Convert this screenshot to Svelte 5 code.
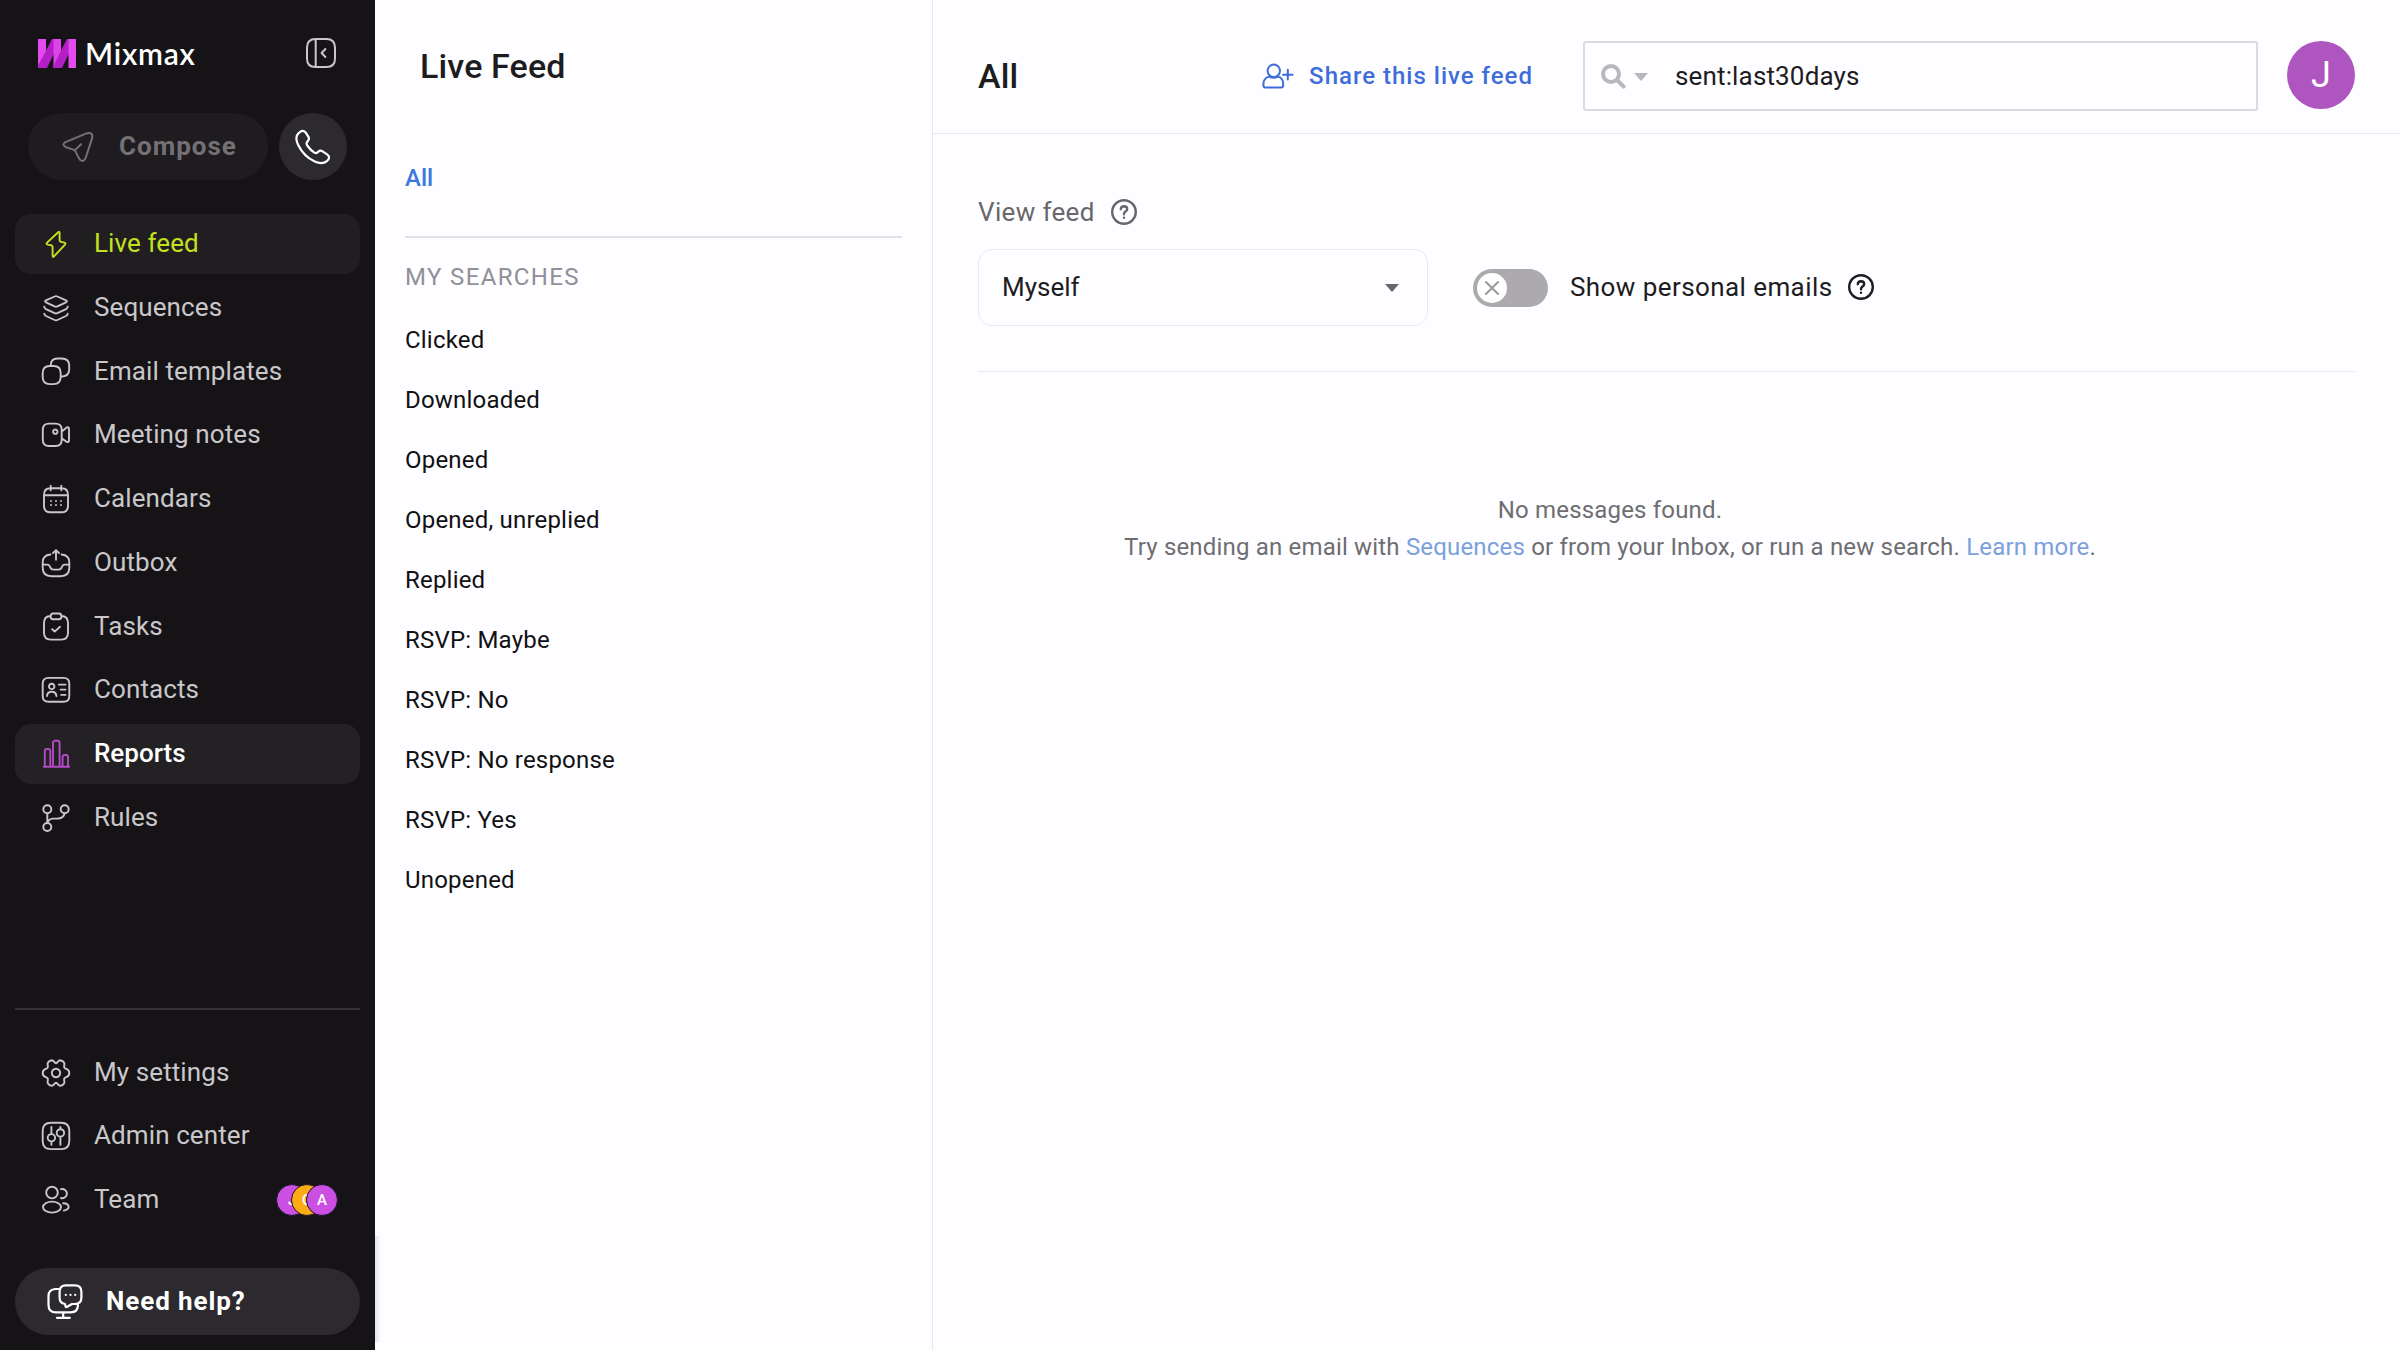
<script lang="ts">
	type NavItem = { label: string; icon: string };

	let active = $state('Live feed');
	let hovered = $state('Reports');
	let search = $state('sent:last30days');
	let showPersonal = $state(false);

	const mainNav: NavItem[] = [
		{ label: 'Live feed', icon: 'bolt' },
		{ label: 'Sequences', icon: 'layers' },
		{ label: 'Email templates', icon: 'copy' },
		{ label: 'Meeting notes', icon: 'video' },
		{ label: 'Calendars', icon: 'calendar' },
		{ label: 'Outbox', icon: 'outbox' },
		{ label: 'Tasks', icon: 'clipboard' },
		{ label: 'Contacts', icon: 'card' },
		{ label: 'Reports', icon: 'chart' },
		{ label: 'Rules', icon: 'branch' }
	];

	const footerNav: NavItem[] = [
		{ label: 'My settings', icon: 'gear' },
		{ label: 'Admin center', icon: 'sliders' },
		{ label: 'Team', icon: 'team' }
	];

	const team = [
		{ initial: 'J', color: '#cb50e2' },
		{ initial: 'C', color: '#fdab14' },
		{ initial: 'A', color: '#cb50e2' }
	];

	const searches = [
		'Clicked',
		'Downloaded',
		'Opened',
		'Opened, unreplied',
		'Replied',
		'RSVP: Maybe',
		'RSVP: No',
		'RSVP: No response',
		'RSVP: Yes',
		'Unopened'
	];

	// 30x30 stroke icons
	const icons: Record<string, string> = {
		bolt: 'M17.2 3.2L6.1 13.6Q4.8 15.1 6.8 15.6L10.2 16.2Q11.6 16.5 11.6 18V26.6Q11.7 28.6 13.2 27.2L24 15.6Q25.2 14.2 23.4 13.6L20 12.9Q18.6 12.6 18.6 11.2V3.8Q18.5 2 17.2 3.2Z',
		layers:
			'M13.6 3.5Q15 2.8 16.4 3.5L25 7.4Q26.8 8.3 25 9.3L16.4 13.4Q15 14 13.6 13.4L5 9.3Q3.2 8.3 5 7.4ZM3.3 13.8Q3.4 15.4 5 16.2L13.6 20.2Q15 20.9 16.4 20.2L25 16.2Q26.6 15.4 26.7 13.8M3.3 20.7Q3.4 22.2 5 23L13.6 27Q15 27.7 16.4 27L25 23Q26.6 22.2 26.7 20.7',
		copy: 'M8.7 9H12.7Q19.7 9 19.7 16V20.1Q19.7 27.1 12.7 27.1H8.7Q1.7 27.1 1.7 20.1V16Q1.7 9 8.7 9ZM9.7 8.8Q9.7 1.5 16.5 1.5H20.5Q28.2 1.5 28.2 8.5V12.5Q28.2 19.5 19.7 19.7',
		video: 'M8 3.6H14.5Q20.7 3.6 20.7 9.8V19.8Q20.7 26 14.5 26H8Q1.8 26 1.8 19.8V9.8Q1.8 3.6 8 3.6ZM20.8 11.5L25.4 7.7Q28 6.3 28 9V20.4Q28 23 25.4 21.7L20.8 18.2M16.5 11.7A2.2 2.2 0 1 1 12.1 11.7A2.2 2.2 0 1 1 16.5 11.7',
		calendar:
			'M9.5 4.3H20.5Q27 4.3 27 10.8V21.8Q27 28.3 20.5 28.3H9.5Q3 28.3 3 21.8V10.8Q3 4.3 9.5 4.3ZM3 11.3H27M9.7 1.7V6.2M20.3 1.7V6.2M10 17v.1M15 17v.1M20 17v.1M10 21v.1M15 21v.1M20 21v.1',
		outbox:
			'M9.4 6.5Q1.7 7.2 1.7 14.5V19.5Q1.7 28.2 10.5 28.2H19.5Q28.3 28.2 28.3 19.5V14.5Q28.3 7.2 20.6 6.5M15 11.8V2.4M12 5.2L15 2.2L18 5.2M1.7 16.6H6.2Q8 16.6 8.8 18.4L9.6 20Q10.4 21.6 12.2 21.6H17.8Q19.6 21.6 20.4 20L21.2 18.4Q22 16.6 23.8 16.6H28.3',
		clipboard:
			'M9.7 4Q3 4.3 3 10.8V20.8Q3 27.6 9.8 27.6H20.2Q27 27.6 27 20.8V10.8Q27 4.3 20.3 4M12 1.5H18Q20.3 1.5 20.3 4V5Q20.3 7.2 18 7.2H12Q9.7 7.2 9.7 5V4Q9.7 1.5 12 1.5ZM11.2 17.2L13.7 19.6L19 14.8',
		card: 'M7.5 2.9H22.5Q28.3 2.9 28.3 8.7V20.9Q28.3 26.7 22.5 26.7H7.5Q1.7 26.7 1.7 20.9V8.7Q1.7 2.9 7.5 2.9ZM13.4 11.4A2.7 2.7 0 1 1 8 11.4A2.7 2.7 0 1 1 13.4 11.4M6 21Q6.4 16.8 10.7 16.8Q15 16.8 15.4 21M17.8 9.6H24.5M19.6 14.6H24.5M20.2 19.9H24.5',
		chart: 'M2.8 27.7H28.2M3.8 27.5V12Q3.8 10 5.8 10H7.3Q9.3 10 9.3 12V27.5M12 27.5V4Q12 1.8 14 1.8H16.6Q18.6 1.8 18.6 4V27.5M21.6 27.5V18Q21.6 16 23.6 16H25Q27 16 27 18V27.5',
		branch: 'M10.3 6.2A4 4 0 1 1 2.3 6.2A4 4 0 1 1 10.3 6.2M27.7 6.2A4 4 0 1 1 19.7 6.2A4 4 0 1 1 27.7 6.2M10.3 24A4 4 0 1 1 2.3 24A4 4 0 1 1 10.3 24M6.3 10.2V20M23.7 10.2Q22.6 15.6 16 15.6H12Q7.4 15.8 6.3 20',
		gear: 'M15 5.2C16.6 5.2 17 2.2 19.2 2.2Q22 2.6 23.2 4.8C24 7 22.4 8.2 23.4 9.8C24.6 11.4 28.3 10.4 28.3 15C28.3 19.6 24.6 18.6 23.4 20.2C22.4 21.8 24 23 23.2 25.2Q22 27.4 19.2 27.8C17 27.8 16.6 24.8 15 24.8C13.4 24.8 13 27.8 10.8 27.8Q8 27.4 6.8 25.2C6 23 7.6 21.8 6.6 20.2C5.4 18.6 1.7 19.6 1.7 15C1.7 10.4 5.4 11.4 6.6 9.8C7.6 8.2 6 7 6.8 4.8Q8 2.6 10.8 2.2C13 2.2 13.4 5.2 15 5.2ZM19.2 15A4.2 4.2 0 1 1 10.8 15A4.2 4.2 0 1 1 19.2 15',
		sliders:
			'M10 1.7H20Q28.3 1.7 28.3 10V20Q28.3 28.1 20 28.1H10Q1.7 28.1 1.7 20V10Q1.7 1.7 10 1.7ZM10.4 6V13M10.4 20.6V23.7M14.1 16.8A3.7 3.7 0 1 1 6.7 16.8A3.7 3.7 0 1 1 14.1 16.8M19.4 6V8.1M19.4 15.6V23.7M23.1 11.9A3.7 3.7 0 1 1 15.7 11.9A3.7 3.7 0 1 1 23.1 11.9',
		team: 'M16.8 7.6A5.8 5.8 0 1 1 5.2 7.6A5.8 5.8 0 1 1 16.8 7.6M20 22.1A9 5.5 0 1 1 2 22.1A9 5.5 0 1 1 20 22.1M20 4.2A4.6 4.6 0 1 1 20 13M22.2 18.2Q27.6 18.4 27.6 21.8Q27.6 24.6 22.8 25.6'
	};
</script>

{#snippet icon(name: string)}
	<svg class="icon" viewBox="0 0 30 30" aria-hidden="true"><path d={icons[name]} /></svg>
{/snippet}

{#snippet navRow(item: NavItem)}
	<button
		class="nav-item"
		class:active={active === item.label}
		class:hovered={hovered === item.label}
		onclick={() => (active = item.label)}
		onmouseenter={() => (hovered = item.label)}
	>
		{@render icon(item.icon)}
		<span>{item.label}</span>
		{#if item.label === 'Team'}
			<div class="avatars">
				{#each team as member}
					<i style="background: {member.color}">{member.initial}</i>
				{/each}
			</div>
		{/if}
	</button>
{/snippet}

{#snippet help()}
	<svg class="help-icon" viewBox="0 0 28 28" aria-hidden="true">
		<circle cx="14" cy="14" r="11.8" />
		<path d="M10.8 11.2Q11 8.3 14.1 8.3Q17.2 8.4 17.2 11Q17.2 12.6 15.4 13.6Q14 14.5 14 16.2" />
		<path d="M14 19.6v.2" />
	</svg>
{/snippet}

<div class="app">
	<aside class="sidebar">
		<div class="brand">
			<svg class="mark" viewBox="0 0 38 29" aria-hidden="true">
				<path d="M14 0H23L9 29H0V27Z" fill="#b41ec6" />
				<path d="M29 0H38L24 29H15V27Z" fill="#b41ec6" />
				<path d="M0 0H8V12L0 27Z" fill="#e34af0" />
				<path d="M15.5 0H23V12L15.5 27Z" fill="#dd45ea" />
				<path d="M30.5 0H38V29H30.5Z" fill="#e34af0" />
			</svg>
			<span class="wordmark">Mixmax</span>
			<button class="collapse" aria-label="Collapse sidebar">
				<svg viewBox="0 0 30 30">
					<path
						d="M9.5 1H20.5Q29 1 29 9.5V20.5Q29 29 20.5 29H9.5Q1 29 1 20.5V9.5Q1 1 9.5 1ZM9.7 1V29M19.4 11L15.6 15L19.4 19"
					/>
				</svg>
			</button>
		</div>

		<div class="actions">
			<button class="compose">
				<svg viewBox="0 0 32 32" aria-hidden="true">
					<path
						d="M3.4 11.2L24.5 2.4Q31.6 .4 30 7.6L23.6 27Q20.6 33 17 27.4L13.6 20.6Q12.8 19.2 11.4 18.6L4 16.2Q-.8 13.6 3.4 11.2ZM12.8 19.4L19 13.2"
					/>
				</svg>
				<span>Compose</span>
			</button>
			<button class="phone" aria-label="Call">
				<svg viewBox="0 0 36 36">
					<path
						d="M3.4 4.4Q7.4-.2 10.6 3.4L13.6 8.2Q14.6 10.2 12.6 12.4Q10.6 14.2 12.6 17Q15.4 21 19.4 23.6Q21.6 24.8 23.2 22.8Q25.2 20.8 27.6 22.4L32.4 25.6Q35.8 28.2 32.2 31.8Q27.4 36 19.8 32.6Q8.6 27.2 3.2 16Q-.6 8.2 3.4 4.4Z"
					/>
				</svg>
			</button>
		</div>

		<nav class="main-nav">
			{#each mainNav as item (item.label)}
				{@render navRow(item)}
			{/each}
		</nav>

		<nav class="footer-nav">
			{#each footerNav as item (item.label)}
				{@render navRow(item)}
			{/each}
		</nav>

		<button class="need-help">
			<svg viewBox="0 0 36 36" aria-hidden="true">
				<path
					d="M11.5 5H8.5Q1.5 5.4 1.5 12V21Q1.5 28.4 9 28.4H23.5Q30.6 28.4 31 21.4M16.2 28.6V33.4M10 33.8H22.8M18.8 1.4H28Q34.4 1.4 34.4 7.8V13.6Q34.4 20 28 20H25L20.2 22.8Q18.6 23.6 18.4 21.8L18 20Q12.6 19.4 12.6 13.6V7.8Q12.6 1.4 18.8 1.4ZM18.8 10.8v.1M23.5 10.8v.1M28.2 10.8v.1"
				/>
			</svg>
			<span>Need help?</span>
		</button>
	</aside>

	<section class="panel">
		<h1>Live Feed</h1>
		<a class="all" href="#all">All</a>
		<h2>MY SEARCHES</h2>
		<ul>
			{#each searches as name}
				<li>{name}</li>
			{/each}
		</ul>
	</section>

	<main>
		<header>
			<h1>All</h1>
			<button class="share">
				<svg viewBox="0 0 32 26" aria-hidden="true">
					<circle cx="11.8" cy="7.8" r="6.2" />
					<path
						d="M7.4 13.6Q1.4 15 1.4 21V22.6Q1.4 24.4 3.2 24.4H19.4Q21.2 24.4 21.2 22.6V21Q21.2 15 16 13.6Q11.8 16 7.4 13.6M25.8 6.8V16.6M21 11.7H30.6"
					/>
				</svg>
				<span>Share this live feed</span>
			</button>
			<label class="search">
				<svg class="glass" viewBox="0 0 25 25" aria-hidden="true">
					<circle cx="10" cy="10" r="8" />
					<path d="M16 16L22.6 22.6" />
				</svg>
				<i class="caret"></i>
				<input bind:value={search} aria-label="Search" />
			</label>
			<div class="me">J</div>
		</header>

		<div class="filters">
			<div class="view-label">
				<span>View feed</span>
				{@render help()}
			</div>
			<div class="filter-row">
				<button class="select">
					<span>Myself</span>
					<i class="caret"></i>
				</button>
				<button
					class="toggle"
					class:on={showPersonal}
					role="switch"
					aria-checked={showPersonal}
					aria-label="Show personal emails"
					onclick={() => (showPersonal = !showPersonal)}
				>
					<svg viewBox="0 0 30 30"><path d="M9 9L21 21M21 9L9 21" /></svg>
				</button>
				<div class="toggle-label">
					<span>Show personal emails</span>
					{@render help()}
				</div>
			</div>
		</div>

		<div class="empty">
			<p>No messages found.</p>
			<p>
				Try sending an email with <a href="#sequences">Sequences</a> or from your Inbox, or run a new
				search. <a href="#learn">Learn more</a>.
			</p>
		</div>
	</main>
</div>

<style>
	:global(body) {
		margin: 0;
		background: #fefdff;
	}

	.app {
		display: flex;
		width: 2400px;
		height: 1350px;
		overflow: hidden;
		font-family: Roboto, 'Liberation Sans', sans-serif;
		font-size: 24px;
		color: #1d1c1f;
	}

	.app * {
		box-sizing: border-box;
	}

	button {
		margin: 0;
		padding: 0;
		border: 0;
		background: none;
		font: inherit;
		color: inherit;
		text-align: left;
		cursor: pointer;
	}

	a {
		text-decoration: none;
	}

	svg {
		display: block;
		flex: none;
		fill: none;
		stroke: currentColor;
		stroke-width: 2;
		stroke-linecap: round;
		stroke-linejoin: round;
	}

	/* sidebar */
	.sidebar {
		position: relative;
		display: flex;
		flex-direction: column;
		flex: none;
		width: 375px;
		padding: 38px 15px 15px;
		background: #151316;
		color: #c9c7ca;
	}

	/* soft edge beside the help button */
	.sidebar::after {
		content: '';
		position: absolute;
		left: 100%;
		bottom: 8px;
		width: 6px;
		height: 106px;
		background: linear-gradient(90deg, rgba(0, 0, 0, 0.1), transparent);
	}

	.brand {
		display: flex;
		align-items: center;
		height: 30px;
		padding: 0 24px 0 23px;
	}

	.mark {
		width: 38px;
		height: 29px;
		stroke: none;
	}

	.wordmark {
		margin-left: 9px;
		font-family: Lato, sans-serif;
		font-size: 30px;
		font-weight: 600;
		line-height: 30px;
		letter-spacing: 0.8px;
		color: #fff;
	}

	.collapse {
		margin-left: auto;
	}

	.collapse svg {
		width: 30px;
		height: 30px;
	}

	.actions {
		display: flex;
		gap: 11px;
		margin: 45px 0 34px 13px;
	}

	.compose {
		display: flex;
		align-items: center;
		width: 240px;
		height: 67px;
		padding-left: 34px;
		border-radius: 34px;
		background: #1e1c1f;
		font-size: 26px;
		font-weight: 700;
		letter-spacing: 1px;
		color: #737175;
	}

	.compose svg {
		width: 32px;
		height: 32px;
		margin-right: 25px;
	}

	.compose span,
	.need-help span {
		padding-bottom: 2px;
	}

	.phone {
		display: grid;
		place-items: center;
		width: 68px;
		height: 67px;
		border-radius: 50%;
		background: #2c2a2e;
		color: #fff;
	}

	.phone svg {
		width: 36px;
		height: 36px;
		stroke-width: 2.2;
	}

	.main-nav,
	.footer-nav {
		display: flex;
		flex-direction: column;
		gap: 3.75px;
	}

	.nav-item {
		display: flex;
		align-items: center;
		height: 60px;
		padding: 0 22px 0 26px;
		border-radius: 16px;
		font-size: 26px;
		letter-spacing: 0.1px;
	}

	.nav-item span {
		margin-left: 23px;
		padding-bottom: 2px;
	}

	.nav-item.active {
		background: #201e21;
		color: #c4e01f;
	}

	.nav-item.hovered {
		background: #232124;
		color: #fff;
		font-weight: 500;
		letter-spacing: 0;
	}

	.nav-item.hovered .icon {
		color: #b44ac6;
	}

	.icon {
		width: 30px;
		height: 30px;
		stroke-width: 1.9;
	}

	.footer-nav {
		margin-top: auto;
		padding-top: 33px;
		border-top: 2px solid #343237;
	}

	.avatars {
		display: flex;
		margin-left: auto;
	}

	.avatars i {
		width: 32px;
		height: 32px;
		margin-left: -17px;
		border: 1px solid #1c1030;
		border-radius: 50%;
		font-size: 15px;
		font-style: normal;
		font-weight: 500;
		line-height: 30px;
		text-align: center;
		color: #fff;
	}

	.need-help {
		display: flex;
		align-items: center;
		height: 67px;
		margin-top: 38px;
		padding-left: 32px;
		border-radius: 34px;
		background: #2c2a2e;
		font-size: 26px;
		font-weight: 700;
		letter-spacing: 0.9px;
		color: #fff;
	}

	.need-help svg {
		width: 36px;
		height: 36px;
		margin-right: 23px;
		stroke-width: 2.2;
	}

	/* saved searches */
	.panel {
		flex: none;
		width: 558px;
		padding: 46px 30px 0;
		border-right: 1px solid #e9e8ec;
	}

	h1 {
		margin: 0;
		font-size: 34px;
		font-weight: 500;
		line-height: 40px;
		letter-spacing: 0.15px;
	}

	.panel h1 {
		margin-left: 15px;
	}

	.all {
		display: block;
		height: 74px;
		margin-top: 78px;
		border-bottom: 2px solid #e2e1e5;
		font-weight: 500;
		line-height: 29px;
		color: #3a7adf;
	}

	h2 {
		margin: 24px 0 18px;
		font-size: 24px;
		font-weight: 400;
		line-height: 30px;
		letter-spacing: 1.35px;
		color: #918f99;
	}

	ul {
		margin: 0;
		padding: 0;
		list-style: none;
	}

	li {
		height: 60px;
		line-height: 60px;
		letter-spacing: 0.2px;
		color: #111013;
	}

	/* feed */
	main {
		flex: 1;
		min-width: 0;
	}

	header {
		display: flex;
		align-items: center;
		height: 134px;
		padding: 19px 45px 0 45px;
		border-bottom: 1px solid #e9e8ec;
	}

	.share {
		display: flex;
		align-items: center;
		gap: 15px;
		margin-left: auto;
		font-weight: 500;
		letter-spacing: 1px;
		color: #3f6ddb;
	}

	.share svg {
		width: 32px;
		height: 26px;
	}

	.search {
		display: flex;
		align-items: center;
		width: 675px;
		height: 70px;
		margin: 0 29px 0 50px;
		padding-left: 16px;
		border: 2px solid #dcdbdf;
		border-radius: 3px;
	}

	.glass {
		width: 25px;
		height: 25px;
		stroke: #b9b7be;
		stroke-width: 4;
	}

	.caret {
		flex: none;
		border: 7.5px solid transparent;
		border-top: 8px solid #b9b7be;
		border-bottom: 0;
	}

	.search .caret {
		margin: 2px 27px 0 8px;
	}

	input {
		flex: 1;
		padding: 0;
		border: 0;
		outline: 0;
		background: none;
		font: inherit;
		font-size: 26px;
		letter-spacing: 0.15px;
		color: #1d1c1f;
	}

	.me {
		display: grid;
		place-items: center;
		width: 68px;
		height: 68px;
		margin-bottom: 2px;
		border-radius: 50%;
		background: #ae55c0;
		font-size: 36px;
		color: #fff;
	}

	.filters {
		height: 238px;
		margin: 0 45px;
		padding-top: 63px;
		border-bottom: 1px solid #e9e8ec;
	}

	.view-label {
		display: flex;
		align-items: center;
		gap: 15px;
		height: 30px;
		font-size: 26px;
		letter-spacing: 0.35px;
		color: #69676b;
	}

	.help-icon {
		width: 28px;
		height: 28px;
		stroke-width: 2.4;
	}

	.filter-row {
		display: flex;
		align-items: center;
		margin-top: 22px;
		font-size: 26px;
		letter-spacing: 0.3px;
	}

	.select {
		display: flex;
		align-items: center;
		justify-content: space-between;
		width: 450px;
		height: 77px;
		padding: 0 28px 2px 23px;
		border: 1px solid #e9e8ec;
		border-radius: 14px;
	}

	.select .caret {
		margin-top: 2px;
		border-top-color: #69676b;
	}

	.toggle {
		width: 75px;
		height: 38px;
		margin: 0 22px 0 45px;
		padding: 4px;
		border-radius: 19px;
		background: #acaaad;
	}

	.toggle.on {
		padding-left: 41px;
		background: #3f6ddb;
	}

	.toggle svg {
		width: 30px;
		height: 30px;
		border-radius: 50%;
		background: #fff;
		stroke: #9b999c;
	}

	.toggle-label {
		display: flex;
		align-items: center;
		gap: 15px;
		padding-bottom: 2px;
		letter-spacing: 0.42px;
	}

	.empty {
		width: 1262px;
		margin: 120px 0 0 46px;
		line-height: 37px;
		letter-spacing: 0.18px;
		text-align: center;
		color: #6e6d71;
	}

	.empty p {
		margin: 0;
	}

	.empty a {
		color: #7ba0db;
	}
</style>
